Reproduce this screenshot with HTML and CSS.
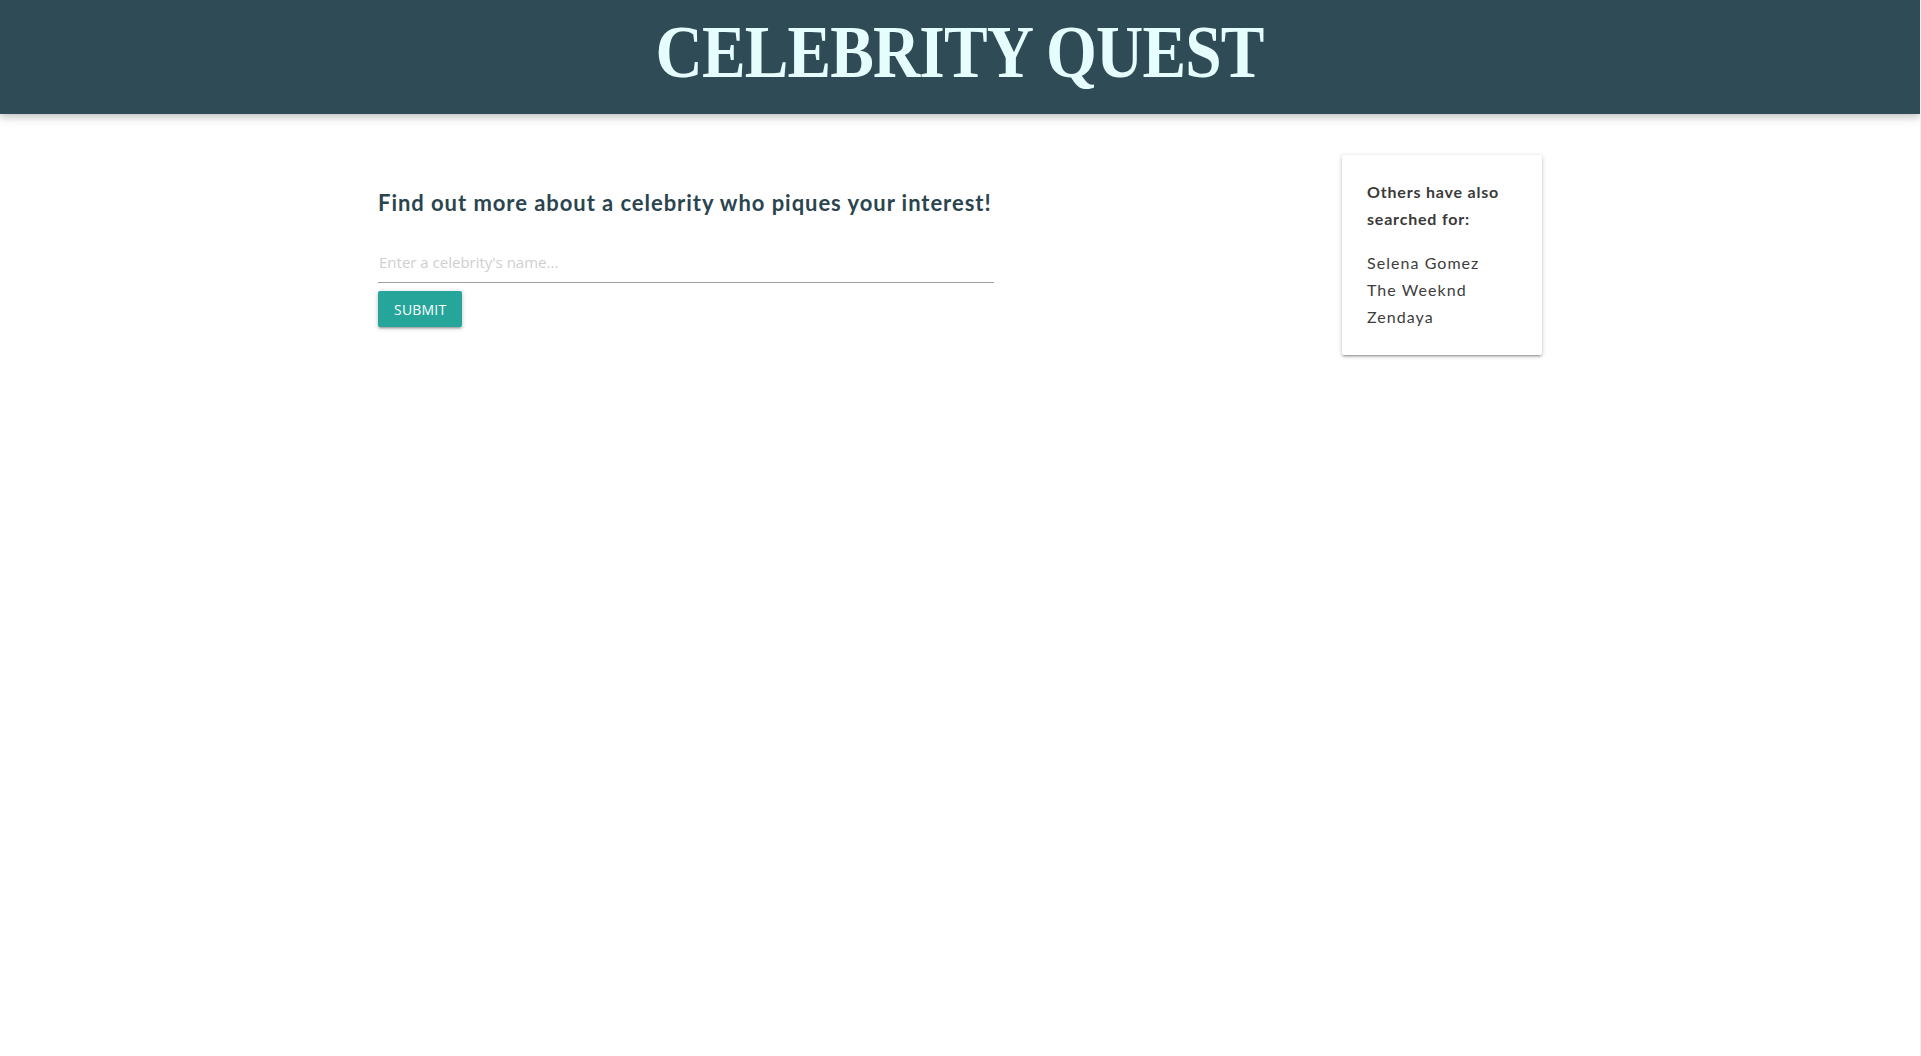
FILE: index.html
```html
<!DOCTYPE html>
<html lang="en">
<head>
<meta charset="utf-8">
<title>Celebrity Quest</title>
<link rel="stylesheet" href="styles.css">
</head>
<body>
<header class="site-header">
  <h1 class="site-title">CELEBRITY QUEST</h1>
</header>
<main class="main">
  <section class="search">
    <h2 class="search-title">Find out more about a celebrity who piques your interest!</h2>
    <form class="search-form">
      <input class="search-input" type="text" placeholder="Enter a celebrity's name...">
      <button class="btn" type="button">SUBMIT</button>
    </form>
  </section>
  <aside class="card">
    <h3 class="card-title">Others have also searched for:</h3>
    <ul class="card-list">
      <li>Selena Gomez</li>
      <li>The Weeknd</li>
      <li>Zendaya</li>
    </ul>
  </aside>
</main>
</body>
</html>
```
FILE: styles.css
```css
html, body {
  margin: 0;
  padding: 0;
  background: #ffffff;
}
body {
  font-family: "Lato", "Noto Sans", sans-serif;
  min-height: 1056px;
  border-right: 1px solid #f0f0f0;
  box-sizing: border-box;
}
.site-header {
  height: 114px;
  background: #2f4b55;
  box-shadow: 0 4px 6px rgba(0,0,0,0.14), 0 2px 14px rgba(0,0,0,0.10);
  display: flex;
  justify-content: center;
  align-items: flex-start;
  position: relative;
  z-index: 1;
}
.site-title {
  margin: 0;
  padding-top: 12px;
  font-family: "Liberation Serif", "Times New Roman", serif;
  font-weight: 700;
  font-size: 75px;
  line-height: 80px;
  color: #e6fdfd;
  letter-spacing: -1px;
  transform: scaleX(0.872);
  white-space: nowrap;
}
.main {
  width: 1164px;
  margin: 41px 0 0 378px;
  display: flex;
  justify-content: space-between;
  align-items: flex-start;
}
.search {
  width: 616px;
  padding-top: 34px;
}
.search-title {
  margin: 0;
  font-family: "Lato", sans-serif;
  font-weight: 700;
  font-size: 22px;
  line-height: 28px;
  letter-spacing: 0.95px;
  color: #2b4550;
  white-space: nowrap;
}
.search-form {
  margin-top: 24px;
}
.search-input {
  display: block;
  width: 100%;
  box-sizing: border-box;
  height: 42px;
  border: none;
  border-bottom: 1px solid #9e9e9e;
  outline: none;
  padding: 0 0 0 1px;
  margin: 0 0 8px 0;
  font-family: "Open Sans", sans-serif;
  font-size: 15px;
  color: #333;
  background: transparent;
}
.search-input::placeholder {
  color: #cfcfcf;
}
.btn {
  display: block;
  height: 36px;
  padding: 0 16px;
  border: none;
  border-radius: 2px;
  background: #26a69a;
  color: #ffffff;
  font-family: "Open Sans", sans-serif;
  font-size: 14px;
  letter-spacing: 0.2px;
  box-shadow: 0 2px 2px rgba(0,0,0,0.14), 0 3px 1px -2px rgba(0,0,0,0.12), 0 1px 5px rgba(0,0,0,0.2);
  cursor: pointer;
}
.card {
  width: 200px;
  box-sizing: border-box;
  padding: 23px 20px 25px 25px;
  background: #ffffff;
  box-shadow: 0 2px 2px rgba(0,0,0,0.14), 0 3px 1px -2px rgba(0,0,0,0.12), 0 1px 5px rgba(0,0,0,0.2);
  border-radius: 2px;
  color: #3a3a3a;
}
.card-title {
  margin: 0 0 17px 0;
  font-family: "Lato", sans-serif;
  font-weight: 700;
  font-size: 16px;
  line-height: 27px;
  letter-spacing: 0.8px;
  color: #3a3a3a;
}
.card-list {
  list-style: none;
  margin: 0;
  padding: 0;
  font-family: "Lato", sans-serif;
  font-weight: 400;
  font-size: 16px;
  line-height: 27px;
  letter-spacing: 1.05px;
  color: #3d3d3d;
}
```
